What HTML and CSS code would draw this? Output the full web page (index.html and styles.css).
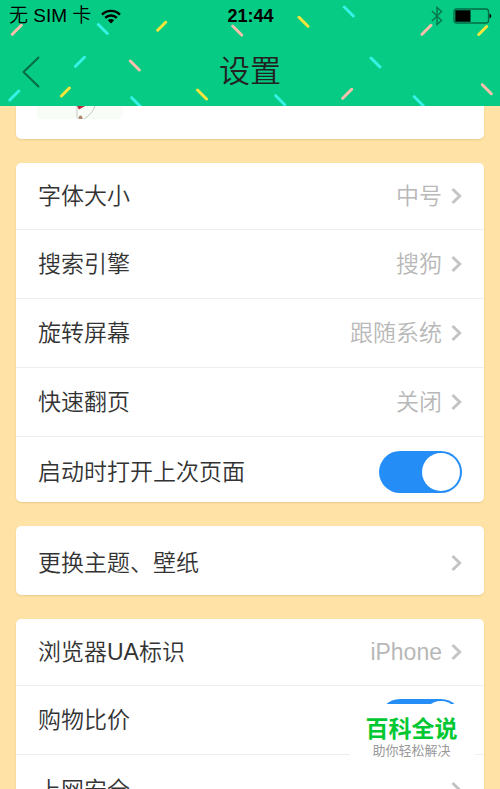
FILE: index.html
```html
<!DOCTYPE html>
<html lang="zh-CN">
<head>
<meta charset="utf-8">
<meta name="viewport" content="width=device-width, initial-scale=1">
<title>设置</title>
<link rel="stylesheet" href="styles.css">
</head>
<body>
<header class="header">
  <svg class="confetti" viewBox="0 0 500 106" preserveAspectRatio="xMidYMid slice" aria-hidden="true">
    <path class="pink" d="M12.3 34.3l9-9M232.7 26l9 9M130.3 61l9 9M422 34.3l9-9M342.7 98.3l9-9M482.3 84.7l9 9"/>
    <path class="cyan" d="M98.3 24.5l9 9M75.5 66.3l9-9M9.8 100l9-9M131.7 97.7l9 9M344.3 7l9 9M371 58l9 9M275.7 95.7l9 9M414.3 96.7l9 9"/>
    <path class="yellow" d="M157.7 30.3l8-8M61.4 96l8-8M197.5 90l9 9M299 17.3l9 9M478.7 34.5l8-8"/>
  </svg>
  <div class="status">
    <div class="carrier">
      <span>无 SIM 卡</span>
      <svg width="20" height="15" viewBox="0 0 20 15" aria-hidden="true">
        <path d="M1 5.6a12.8 12.8 0 0 1 18 0M4.2 8.9a8.2 8.2 0 0 1 11.6 0" fill="none" stroke="#000" stroke-width="2.4"/>
        <path d="M6.8 11.3a4.6 4.6 0 0 1 6.4 0L10 14.6z"/>
      </svg>
    </div>
    <time class="time">21:44</time>
    <div class="indicators">
      <svg width="12" height="20" viewBox="0 0 12 20" aria-hidden="true">
        <path d="M1 5l9.500 9.500L6 18.500v-17l4.500 4L1 15" fill="none" stroke="#047a4e" stroke-width="1.500"/>
      </svg>
      <svg width="39" height="16" viewBox="0 0 39 16" aria-hidden="true">
        <rect x="1" y="1" width="34.500" height="14" rx="2.500" fill="none" stroke="#046b45" stroke-width="1.300"/>
        <path d="M2.300 2.300h15.200v11.400H2.300zM36.500 5.500a2.600 2.600 0 0 1 0 5z"/>
      </svg>
    </div>
  </div>
  <div class="titlebar">
    <button class="back" type="button" aria-label="返回">
      <svg width="18" height="32" viewBox="0 0 18 32" aria-hidden="true">
        <path d="M16.500 1.500L1.500 16l15 14.500" fill="none" stroke="#066b43" stroke-width="2" stroke-linecap="round"/>
      </svg>
    </button>
    <h1 class="title">设置</h1>
  </div>
</header>

<main class="content">
  <section class="card profile">
    <svg class="avatar" width="85" height="13" viewBox="0 0 85 13" aria-hidden="true">
      <path d="M0 0h85v10q0 3-3 3H3q-3 0-3-3z" fill="#f7fcf6"/>
      <path d="M40 0v12M58 0q-2 7-11 13" fill="none" stroke="#c3c9c1"/>
      <path d="M40 0h8l-6 3.500z" fill="#c4233c"/>
      <path d="M41.500 13q0-3.500 2-3.500t2 3.500z" fill="#a98768"/>
    </svg>
  </section>

  <section class="card">
    <a class="row" href="#"><span class="label">字体大小</span><span class="value">中号</span><svg class="chevron" viewBox="0 0 11 18"><path d="M1.500 2l7.200 7-7.200 7"/></svg></a>
    <a class="row" href="#"><span class="label">搜索引擎</span><span class="value">搜狗</span><svg class="chevron" viewBox="0 0 11 18"><path d="M1.500 2l7.200 7-7.200 7"/></svg></a>
    <a class="row" href="#"><span class="label">旋转屏幕</span><span class="value">跟随系统</span><svg class="chevron" viewBox="0 0 11 18"><path d="M1.500 2l7.200 7-7.200 7"/></svg></a>
    <a class="row" href="#"><span class="label">快速翻页</span><span class="value">关闭</span><svg class="chevron" viewBox="0 0 11 18"><path d="M1.500 2l7.200 7-7.200 7"/></svg></a>
    <div class="row"><label class="label" for="restore">启动时打开上次页面</label><input class="switch" type="checkbox" id="restore" checked></div>
  </section>

  <section class="card">
    <a class="row single" href="#"><span class="label">更换主题、壁纸</span><svg class="chevron" viewBox="0 0 11 18"><path d="M1.500 2l7.200 7-7.200 7"/></svg></a>
  </section>

  <section class="card">
    <a class="row" href="#"><span class="label">浏览器UA标识</span><span class="value">iPhone</span><svg class="chevron" viewBox="0 0 11 18"><path d="M1.500 2l7.200 7-7.200 7"/></svg></a>
    <div class="row"><label class="label" for="compare">购物比价</label><input class="switch" type="checkbox" id="compare" checked></div>
    <a class="row" href="#"><span class="label">上网安全</span><svg class="chevron" viewBox="0 0 11 18"><path d="M1.500 2l7.200 7-7.200 7"/></svg></a>
  </section>
</main>

<aside class="badge">
  <strong class="badge-name">百科全说</strong>
  <span class="badge-tagline">助你轻松解决</span>
</aside>
</body>
</html>
```
FILE: styles.css
```css
* {
  box-sizing: border-box;
}

body {
  position: relative;
  display: flex;
  flex-direction: column;
  height: 100vh;
  margin: 0;
  overflow: hidden;
  background: #ffe3a6;
  color: #333;
  font-family: "Liberation Sans", "Noto Sans CJK SC", sans-serif;
  font-size: 23px;
  font-weight: 350;
}

.header {
  position: relative;
  flex: none;
  background: #06cb84;
}

.confetti {
  position: absolute;
  inset: 0;
  width: 100%;
  height: 100%;
  fill: none;
  stroke-width: 3;
  stroke-linecap: round;
}

.pink { stroke: #f8c0ac; }
.cyan { stroke: #35f2e6; }
.yellow { stroke: #f6e53c; }

.status {
  position: relative;
  display: grid;
  grid-template-columns: 1fr auto 1fr;
  align-items: center;
  height: 32px;
  padding: 0 8px 0 9px;
  color: #000;
  font-size: 18px;
  line-height: 32px;
}

.carrier,
.indicators {
  display: flex;
  align-items: center;
  gap: 10px;
}

.carrier {
  font-size: 19px;
}

.indicators {
  justify-content: flex-end;
}

.time {
  font-weight: 700;
}

.titlebar {
  position: relative;
  display: grid;
  grid-template-columns: 48px 1fr 48px;
  align-items: center;
  height: 74px;
  padding-top: 6px;
}

.titlebar .title {
  margin: 0;
  color: #222;
  font-size: 31px;
  font-weight: 350;
  line-height: 48px;
  text-align: center;
}

.back {
  display: flex;
  justify-content: flex-end;
  padding: 8px;
  border: 0;
  background: none;
}

.content {
  flex: 1;
  min-height: 0;
  padding: 0 16px;
  overflow: hidden;
}

.card {
  margin-bottom: 24px;
  border-radius: 5px;
  background: #fff;
  box-shadow: 0 1px 2px rgba(150, 100, 20, 0.2);
}

.profile {
  height: 33px;
  padding: 0 21px;
  border-radius: 0 0 5px 5px;
}

.avatar {
  display: block;
}

.row {
  display: flex;
  align-items: center;
  gap: 9px;
  height: 69px;
  padding: 0 22px;
  border-bottom: 1px solid #eee;
  color: inherit;
  line-height: 34px;
  text-decoration: none;
}

.row:first-child {
  height: 67px;
}

.row:last-child {
  height: 65px;
  padding-top: 4px;
  border-bottom: 0;
}

.row.single {
  height: 69px;
}

.label {
  flex: 1;
}

.value {
  color: #b8b8b8;
}

.chevron {
  width: 11px;
  height: 18px;
  fill: none;
  stroke: #c4c4c4;
  stroke-width: 3;
}

.switch {
  display: flex;
  align-items: center;
  justify-content: flex-end;
  width: 83px;
  height: 42px;
  margin: 0;
  padding: 0 2px;
  border-radius: 21px;
  background: #248df6;
  appearance: none;
}

.switch::before {
  width: 38px;
  height: 38px;
  border-radius: 50%;
  background: #fff;
  content: "";
}

.badge {
  position: absolute;
  right: 25px;
  bottom: 27px;
  display: flex;
  flex-direction: column;
  align-items: center;
  width: 125px;
  height: 58px;
  padding: 11px 2px 0 0;
  background: #fff;
}

.badge-name {
  color: #00c832;
  font-size: 23px;
  font-weight: 700;
  line-height: 28px;
}

.badge-tagline {
  color: #999;
  font-size: 13px;
  font-weight: 400;
  line-height: 16px;
}
```
